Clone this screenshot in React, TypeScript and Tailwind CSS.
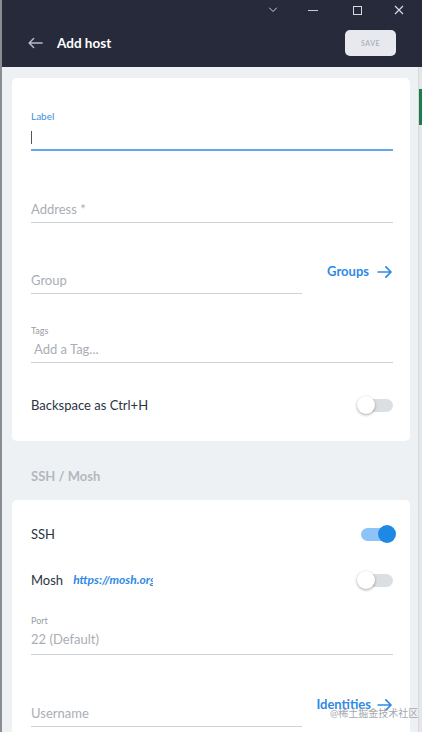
import React from 'react';

const font = { fontFamily: 'Lato, "Noto Sans", "Noto Sans CJK SC", sans-serif' };

const Toggle: React.FC<{ on?: boolean }> = ({ on }) => (
  <div className="relative w-[34px] h-[18px] flex items-center">
    <div className={`w-[34px] h-[13px] rounded-full ${on ? 'bg-[#8ec3f7]' : 'bg-[#dcdfe2]'}`} />
    <div
      className={`absolute top-0 w-[18px] h-[18px] rounded-full ${
        on ? 'right-[-1px] bg-[#1e88e5]' : 'left-[-2px] bg-white shadow-[0_1px_3px_rgba(0,0,0,0.35)]'
      }`}
    />
  </div>
);

const Arrow: React.FC<{ className?: string }> = ({ className }) => (
  <svg viewBox="0 0 18 14" className={className} fill="none" stroke="currentColor" strokeWidth="2" strokeLinecap="round" strokeLinejoin="round">
    <path d="M1 7h15M10 1l6 6-6 6" />
  </svg>
);

const Field: React.FC<{ placeholder: string; short?: boolean; className?: string }> = ({ placeholder, short, className }) => (
  <div className={`${short ? 'w-[271px]' : 'w-full'} border-b border-[#cfd3d7] pb-[6px] ${className ?? ''}`}>
    <div className="text-[13px] leading-[13px] text-[#a9aeb4]">{placeholder}</div>
  </div>
);

export default function App() {
  return (
    <div style={font} className="relative w-[422px] h-[732px] overflow-hidden flex bg-[#eef1f3]">
      <div className="w-[2px] shrink-0 bg-[#8a8d91]" />
      <div className="flex-1 flex flex-col min-w-0">
        {/* title bar */}
        <div className="h-[67px] bg-[#262a3b] shrink-0 relative">
          <div className="absolute top-[2px] left-0 right-0 flex items-center h-[16px] text-[#d7d9df]">
            <svg viewBox="0 0 12 8" className="absolute left-[266px] w-[10px] h-[6px]" fill="none" stroke="currentColor" strokeWidth="1.3">
              <path d="M1 1l5 5 5-5" />
            </svg>
            <div className="absolute left-[306px] w-[10px] h-[1px] bg-[#c9ccd3]" />
            <div className="absolute left-[351px] w-[9px] h-[9px] border border-[#d7d9df]" />
            <svg viewBox="0 0 10 10" className="absolute left-[392px] w-[10px] h-[10px]" fill="none" stroke="currentColor" strokeWidth="1.2">
              <path d="M1 1l8 8M9 1l-8 8" />
            </svg>
          </div>
          <div className="absolute left-0 right-0 top-[30px] flex items-center pl-[26px] pr-[26px]">
            <svg viewBox="0 0 16 12" className="w-[15px] h-[12px] text-[#b9bcc6]" fill="none" stroke="currentColor" strokeWidth="1.6" strokeLinecap="round" strokeLinejoin="round">
              <path d="M15 6H1.5M6 1.2L1.2 6 6 10.8" />
            </svg>
            <span className="ml-[14px] text-white text-[13.5px] font-bold">Add host</span>
            <div className="ml-auto w-[51px] h-[26px] rounded-[5px] bg-[#e7e9ef] flex items-center justify-center text-[7px] font-bold tracking-[0.5px] text-[#b2b5bd]">
              SAVE
            </div>
          </div>
        </div>

        <div className="flex-1 flex min-h-0">
          <div className="flex-1 pt-[11px] pl-[10px] pr-[8px] flex flex-col">
            {/* card 1 */}
            <div className="bg-white rounded-[5px] pt-[33px] pl-[19px] pr-[17px] pb-[27px]">
              <div className="text-[10px] leading-[10px] text-[#3d8fe0]">Label</div>
              <div className="mt-[10px] h-[20px] border-b-2 border-[#62a6ec]">
                <div className="w-[1px] h-[13px] bg-[#555]" />
              </div>
              <div className="mt-[52px]">
                <Field placeholder="Address *" />
              </div>
              <div className="mt-[42px] flex items-start justify-between">
                <Field placeholder="Group" short className="mt-[9px]" />
                <div className="flex items-center gap-[8px] text-[#2f8ae4] font-bold text-[13px] leading-[13px]">
                  Groups <Arrow className="w-[16px] h-[12px]" />
                </div>
              </div>
              <div className="mt-[32px] text-[9px] leading-[9px] text-[#9aa0a6]">Tags</div>
              <div className="mt-[8px] w-full border-b border-[#cfd3d7] pb-[6px] pl-[3px]">
                <div className="text-[13px] leading-[13px] text-[#a9aeb4]">Add a Tag...</div>
              </div>
              <div className="mt-[33px] flex items-center justify-between">
                <span className="text-[13px] leading-[13px] text-[#2b3441]">Backspace as Ctrl+H</span>
                <Toggle />
              </div>
            </div>

            <div className="pt-[29px] pb-[17px] pl-[19px] text-[13px] leading-[13px] font-bold text-[#b3b8bd]">SSH / Mosh</div>

            {/* card 2 */}
            <div className="bg-white rounded-t-[5px] flex-1 pt-[25px] pl-[19px] pr-[17px]">
              <div className="flex items-center justify-between">
                <span className="text-[13px] leading-[13px] text-[#2b3441]">SSH</span>
                <div className="mr-[-2px]"><Toggle on /></div>
              </div>
              <div className="mt-[28px] flex items-center justify-between">
                <div className="flex items-center">
                  <span className="text-[13px] leading-[13px] text-[#2b3441]">Mosh</span>
                  <span className="ml-[10px] w-[80px] overflow-hidden whitespace-nowrap text-[12px] leading-[14px] italic font-bold text-[#2f8ae4]">https://mosh.org</span>
                </div>
                <Toggle />
              </div>
              <div className="mt-[27px] text-[9px] leading-[9px] text-[#9aa0a6]">Port</div>
              <div className="mt-[8px] w-full border-b border-[#cfd3d7] pb-[8px]">
                <div className="text-[13px] leading-[13px] text-[#a9aeb4]">22 (Default)</div>
              </div>
              <div className="mt-[43px] flex items-start justify-between">
                <Field placeholder="Username" short className="mt-[9px] pb-[5px]" />
                <div className="flex items-center gap-[6px] text-[#2f8ae4] font-bold text-[13px] leading-[13px]">
                  Identities <Arrow className="w-[16px] h-[12px]" />
                </div>
              </div>
            </div>
          </div>
          <div className="w-[4px] shrink-0 bg-[#e4e6e8] border-l border-[#d6d8db] flex flex-col">
            <div className="h-[22px]" />
            <div className="h-[36px] bg-[#1f7a4d]" />
          </div>
        </div>
      </div>
      <span className="absolute left-[330px] top-[707px] text-[10px] leading-[12px] text-[#a4a8ad]">@稀土掘金技术社区</span>
    </div>
  );
}
